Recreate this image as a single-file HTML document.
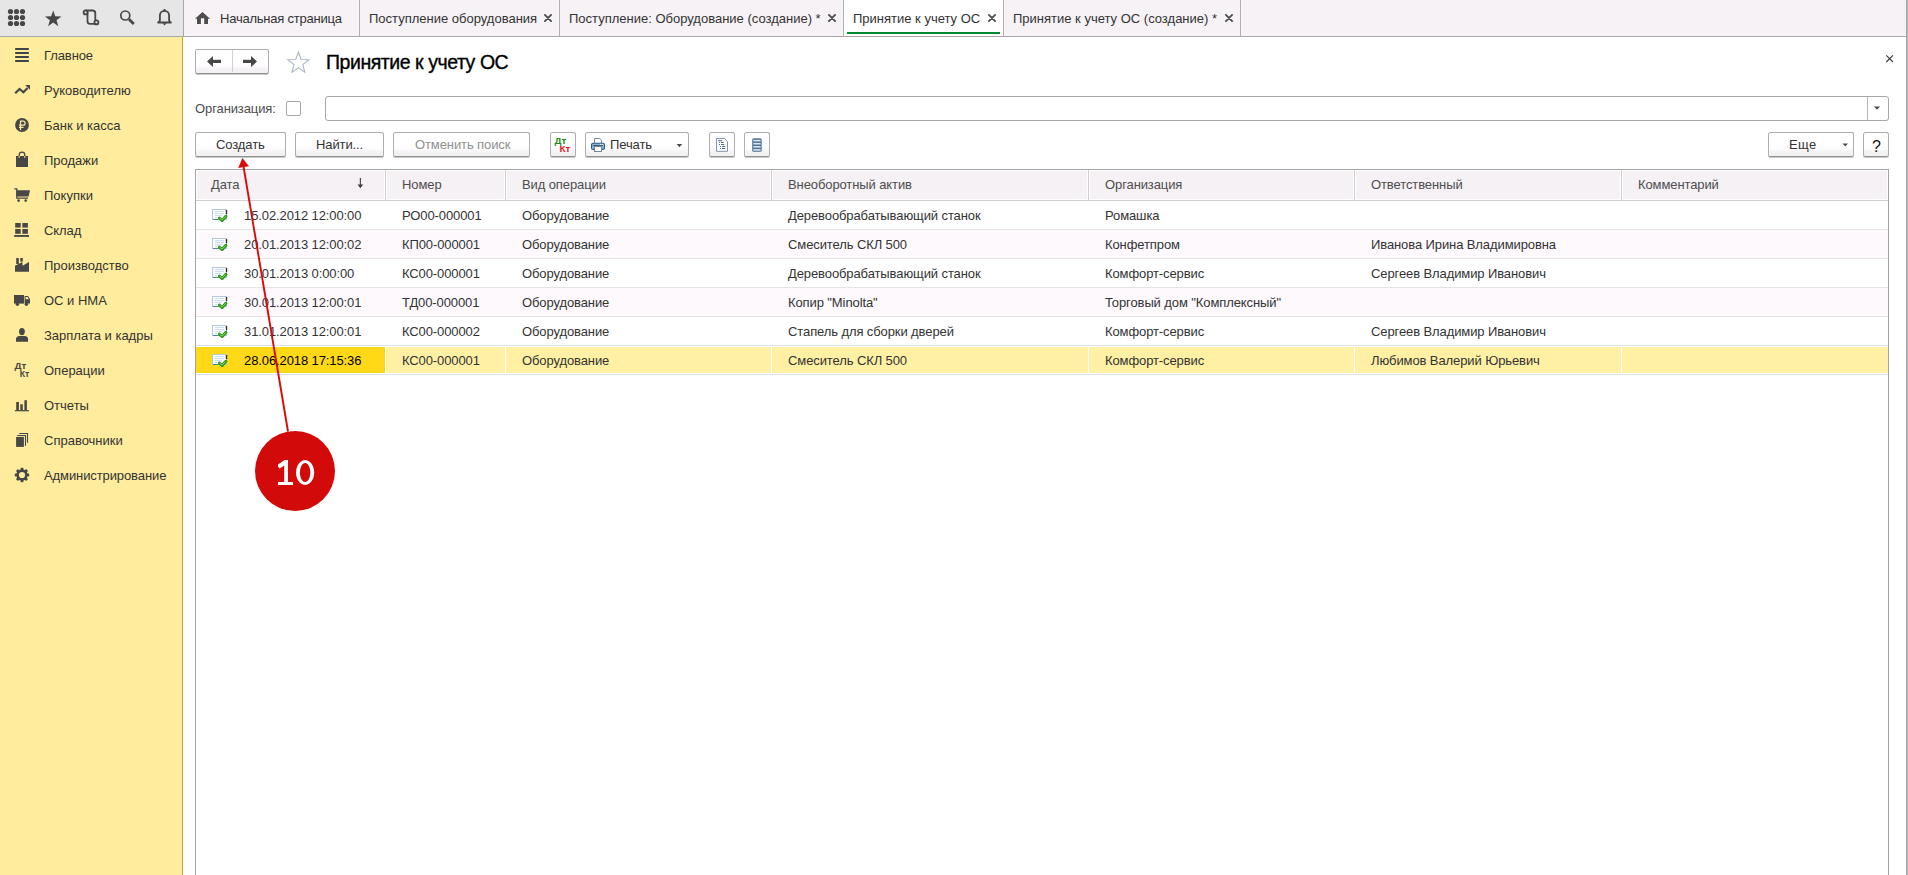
<!DOCTYPE html>
<html><head><meta charset="utf-8">
<style>
*{margin:0;padding:0;box-sizing:border-box}
html,body{width:1908px;height:875px;overflow:hidden;background:#fff}
body{position:relative;font-family:"Liberation Sans",sans-serif;font-size:13px;color:#333;letter-spacing:-0.1px}
.a{position:absolute}
.t{position:absolute;white-space:nowrap;line-height:15px}
svg{position:absolute;overflow:visible}
.btn{position:absolute;border:1px solid #b0aeb2;border-bottom-color:#8f928f;border-radius:2.5px;background:linear-gradient(#fff 0,#fff 60.5%,#fdfbfd 61%,#fdfbfd 73.5%,#f5f5f5 74%,#f5f5f5 82%,#f4f1f4 83%,#f4f1f4 100%);box-shadow:0 1px 0 #c8c8c8}
</style></head><body>
<div class="a" style="left:0px;top:0px;width:183px;height:36px;background:#e6e6e6;"></div>
<div class="a" style="left:184px;top:0px;width:1722px;height:36px;background:#f6f2f6;"></div>
<div class="a" style="left:844px;top:0px;width:159px;height:36px;background:#ffffff;"></div>
<div class="a" style="left:0px;top:36px;width:1906px;height:1px;background:#a9a7aa;"></div>
<div class="a" style="left:183px;top:0px;width:1px;height:36px;background:#a9a7aa;"></div>
<div class="a" style="left:359px;top:0px;width:1px;height:36px;background:#b3b1b4;"></div>
<div class="a" style="left:559px;top:0px;width:1px;height:36px;background:#b3b1b4;"></div>
<div class="a" style="left:843px;top:0px;width:1px;height:36px;background:#b3b1b4;"></div>
<div class="a" style="left:1003px;top:0px;width:1px;height:36px;background:#b3b1b4;"></div>
<div class="a" style="left:1240px;top:0px;width:1px;height:36px;background:#b3b1b4;"></div>
<div class="a" style="left:847px;top:32px;width:153px;height:2px;background:#00892f;"></div>
<div class="a" style="left:1906px;top:0px;width:1px;height:875px;background:#a4a3a8;"></div>
<div class="a" style="left:1907px;top:0px;width:1px;height:875px;background:#b9b9b9;"></div>
<svg style="left:0px;top:0px" width="40" height="36" viewBox="0 0 40 36"><circle cx="10.5" cy="11.5" r="2.6" fill="#474747"/><circle cx="10.5" cy="17.5" r="2.6" fill="#474747"/><circle cx="10.5" cy="23.5" r="2.6" fill="#474747"/><circle cx="16.5" cy="11.5" r="2.6" fill="#474747"/><circle cx="16.5" cy="17.5" r="2.6" fill="#474747"/><circle cx="16.5" cy="23.5" r="2.6" fill="#474747"/><circle cx="22.5" cy="11.5" r="2.6" fill="#474747"/><circle cx="22.5" cy="17.5" r="2.6" fill="#474747"/><circle cx="22.5" cy="23.5" r="2.6" fill="#474747"/></svg>
<svg style="left:40px;top:0px" width="30" height="36" viewBox="40 0 30 36"><polygon points="53.20,10.40 55.26,16.27 61.47,16.41 56.53,20.18 58.31,26.14 53.20,22.60 48.09,26.14 49.87,20.18 44.93,16.41 51.14,16.27" fill="#474747"/></svg>
<svg style="left:78px;top:0px" width="26" height="36" viewBox="78 0 26 36"><g fill="none" stroke="#474747" stroke-width="1.8"><circle cx="85.6" cy="12.4" r="2"/><circle cx="96.4" cy="22.4" r="2"/><path d="M85.6,10.5 H92.6 Q95.3,10.5 95.3,13.3 V20.5"/><path d="M87.5,12.4 V21.3 Q87.5,23.9 90,23.9 H96.4"/></g></svg>
<svg style="left:115px;top:0px" width="26" height="36" viewBox="115 0 26 36"><g fill="none" stroke="#474747"><circle cx="125.3" cy="15.5" r="4.5" stroke-width="1.7"/><path d="M129,19.3 L133.8,24.1" stroke-width="2.8"/></g></svg>
<svg style="left:152px;top:0px" width="26" height="36" viewBox="152 0 26 36"><g fill="none" stroke="#474747" stroke-width="1.8"><path d="M159.9,20.6 V15.4 A4.6,4.6 0 0 1 169.1,15.4 V20.6 L170.9,22.5 H158.1 Z" stroke-linejoin="round"/></g><circle cx="164.5" cy="10.2" r="1.2" fill="#474747"/><path d="M162.5,23.2 H166.5 L164.5,25.6 Z" fill="#474747"/></svg>
<svg style="left:190px;top:0px" width="24" height="36" viewBox="190 0 24 36"><polygon points="202.5,12 210,18.7 208,18.7 208,24 204.2,24 204.2,18.2 200.9,18.2 200.9,24 197,24 197,18.7 195,18.7" fill="#4d4d4d"/></svg>
<div class="t" style="left:220px;top:11px;color:#333;letter-spacing:-0.22px">Начальная страница</div>
<div class="t" style="left:369px;top:11px;color:#333;letter-spacing:0">Поступление оборудования</div>
<svg style="left:543px;top:13px" width="10" height="10" viewBox="543 13 10 10"><path d="M544.9,14.9 L551.1,21.1 M551.1,14.9 L544.9,21.1" stroke="#4a4a4a" stroke-width="1.8" stroke-linecap="round"/></svg>
<div class="t" style="left:569px;top:11px;color:#333;letter-spacing:0">Поступление: Оборудование (создание) *</div>
<svg style="left:827px;top:13px" width="10" height="10" viewBox="827 13 10 10"><path d="M828.9,14.9 L835.1,21.1 M835.1,14.9 L828.9,21.1" stroke="#4a4a4a" stroke-width="1.8" stroke-linecap="round"/></svg>
<div class="t" style="left:853px;top:11px;color:#333;letter-spacing:0">Принятие к учету ОС</div>
<svg style="left:987px;top:13px" width="10" height="10" viewBox="987 13 10 10"><path d="M988.9,14.9 L995.1,21.1 M995.1,14.9 L988.9,21.1" stroke="#4a4a4a" stroke-width="1.8" stroke-linecap="round"/></svg>
<div class="t" style="left:1013px;top:11px;color:#333;letter-spacing:0">Принятие к учету ОС (создание) *</div>
<svg style="left:1223.5px;top:13px" width="10.0" height="10" viewBox="1223.5 13 10.0 10"><path d="M1225.4,14.9 L1231.6,21.1 M1231.6,14.9 L1225.4,21.1" stroke="#4a4a4a" stroke-width="1.8" stroke-linecap="round"/></svg>
<div class="a" style="left:0px;top:37px;width:182px;height:838px;background:#ffec9d;"></div>
<div class="a" style="left:182px;top:37px;width:1px;height:838px;background:#c1a91c;"></div>
<div class="t" style="left:44px;top:48px;color:#333;letter-spacing:-0.1px">Главное</div>
<div class="t" style="left:44px;top:83px;color:#333;letter-spacing:0">Руководителю</div>
<div class="t" style="left:44px;top:118px;color:#333;letter-spacing:0">Банк и касса</div>
<div class="t" style="left:44px;top:153px;color:#333;letter-spacing:0">Продажи</div>
<div class="t" style="left:44px;top:188px;color:#333;letter-spacing:0">Покупки</div>
<div class="t" style="left:44px;top:223px;color:#333;letter-spacing:-0.1px">Склад</div>
<div class="t" style="left:44px;top:258px;color:#333;letter-spacing:0">Производство</div>
<div class="t" style="left:44px;top:293px;color:#333;letter-spacing:0">ОС и НМА</div>
<div class="t" style="left:44px;top:328px;color:#333;letter-spacing:0">Зарплата и кадры</div>
<div class="t" style="left:44px;top:363px;color:#333;letter-spacing:0">Операции</div>
<div class="t" style="left:44px;top:398px;color:#333;letter-spacing:0">Отчеты</div>
<div class="t" style="left:44px;top:433px;color:#333;letter-spacing:0">Справочники</div>
<div class="t" style="left:44px;top:468px;color:#333;letter-spacing:-0.1px">Администрирование</div>
<svg style="left:10px;top:40px" width="24" height="26" viewBox="10 40 24 26"><rect x="15" y="48" width="14" height="2" rx="0.8" fill="#3f4347"/><rect x="15" y="52" width="14" height="2" rx="0.8" fill="#3f4347"/><rect x="15" y="56" width="14" height="2" rx="0.8" fill="#3f4347"/><rect x="15" y="60" width="14" height="2" rx="0.8" fill="#3f4347"/></svg>
<svg style="left:10px;top:80px" width="24" height="20" viewBox="10 80 24 20"><path d="M15.2,93.3 L19.6,89 L23.4,92.3 L27.6,88" fill="none" stroke="#474747" stroke-width="2.2"/><polygon points="25.2,85 30,85 30,89.8" fill="#474747"/></svg>
<svg style="left:10px;top:115px" width="24" height="20" viewBox="10 115 24 20"><circle cx="22" cy="125" r="6.9" fill="#474747"/><path d="M20.5,130 V121.2 H23.2 A1.9,1.9 0 0 1 23.2,125.1 H19 M19,127.4 H23.5" fill="none" stroke="#ffec9d" stroke-width="1.2"/></svg>
<svg style="left:10px;top:148px" width="24" height="24" viewBox="10 148 24 24"><rect x="16" y="156" width="12" height="11" fill="#474747"/><path d="M19.2,157.5 V155 A2.8,2.8 0 0 1 24.8,155 V157.5" fill="none" stroke="#474747" stroke-width="1.3"/><path d="M19.2,156 V158 M24.8,156 V158" stroke="#ffec9d" stroke-width="0.9"/></svg>
<svg style="left:10px;top:185px" width="24" height="20" viewBox="10 185 24 20"><path d="M14.3,188.8 H16.8 V198.2 H28" fill="none" stroke="#474747" stroke-width="1.3"/><polygon points="16.5,190.3 30,190.3 28.6,196.5 16.5,196.5" fill="#474747"/><circle cx="18.6" cy="200.6" r="1.3" fill="#474747"/><circle cx="25.7" cy="200.6" r="1.3" fill="#474747"/></svg>
<svg style="left:10px;top:220px" width="24" height="20" viewBox="10 220 24 20"><g fill="#474747"><rect x="15.2" y="223" width="5.5" height="4.6"/><rect x="22.3" y="223" width="5.6" height="4.6"/><rect x="15.2" y="229" width="5.5" height="4.8"/><rect x="22.3" y="229" width="5.6" height="4.8"/><rect x="14.2" y="235" width="14.8" height="1.9"/></g></svg>
<svg style="left:10px;top:255px" width="24" height="20" viewBox="10 255 24 20"><g fill="#474747"><rect x="16.2" y="258" width="2.6" height="6"/><rect x="20.3" y="258" width="2.5" height="3.6"/><polygon points="15,265.8 22.3,262 22.6,265.8 29,262 29,271.8 15,271.8"/></g></svg>
<svg style="left:10px;top:290px" width="24" height="20" viewBox="10 290 24 20"><g fill="#474747"><rect x="14" y="295" width="10" height="8.6"/><path d="M24.6,296 H28 L30,299 V303.6 H24.6 Z"/><circle cx="17.4" cy="304.2" r="1.7"/><circle cx="26.4" cy="304.2" r="1.7"/></g><path d="M25.6,297 H27.6 L28.9,299.2 H25.6 Z" fill="#ffec9d"/><circle cx="17.4" cy="304.2" r="0.5" fill="#474747"/></svg>
<svg style="left:10px;top:325px" width="24" height="20" viewBox="10 325 24 20"><g fill="#474747"><ellipse cx="21.9" cy="331.6" rx="2.9" ry="3.6"/><path d="M16,341.8 V339 Q16,336.3 19.5,336 H24.5 Q28,336.3 28,339 V341.8 Z"/></g></svg>
<svg style="left:10px;top:358px" width="24" height="22" viewBox="10 358 24 22"><g font-family="Liberation Sans" font-weight="bold" fill="#474747"><text x="14.6" y="369.2" font-size="9.6" textLength="11.6" lengthAdjust="spacingAndGlyphs">Дт</text><text x="19.8" y="377" font-size="9.6" textLength="9.4" lengthAdjust="spacingAndGlyphs">Кт</text></g></svg>
<svg style="left:10px;top:395px" width="24" height="20" viewBox="10 395 24 20"><g fill="#474747"><rect x="16.2" y="402" width="2.7" height="8.5"/><rect x="20.3" y="404.3" width="2.5" height="6.2"/><rect x="24.4" y="400.2" width="2.5" height="10.3"/><rect x="14.9" y="410.1" width="14.1" height="1.2"/></g></svg>
<svg style="left:10px;top:430px" width="24" height="20" viewBox="10 430 24 20"><rect x="16.1" y="436.9" width="7.8" height="10" fill="#474747"/><path d="M17.2,435.5 H25.5 V445.8 M19.3,433.5 H27.5 V442.7" fill="none" stroke="#474747" stroke-width="1.1"/></svg>
<svg style="left:10px;top:465px" width="24" height="20" viewBox="10 465 24 20"><rect x="20.6" y="467.8" width="2.8" height="3" fill="#474747" transform="rotate(0 22 475)"/><rect x="20.6" y="467.8" width="2.8" height="3" fill="#474747" transform="rotate(45 22 475)"/><rect x="20.6" y="467.8" width="2.8" height="3" fill="#474747" transform="rotate(90 22 475)"/><rect x="20.6" y="467.8" width="2.8" height="3" fill="#474747" transform="rotate(135 22 475)"/><rect x="20.6" y="467.8" width="2.8" height="3" fill="#474747" transform="rotate(180 22 475)"/><rect x="20.6" y="467.8" width="2.8" height="3" fill="#474747" transform="rotate(225 22 475)"/><rect x="20.6" y="467.8" width="2.8" height="3" fill="#474747" transform="rotate(270 22 475)"/><rect x="20.6" y="467.8" width="2.8" height="3" fill="#474747" transform="rotate(315 22 475)"/><circle cx="22" cy="475" r="4.4" fill="none" stroke="#474747" stroke-width="2.6"/></svg>
<div class="btn" style="left:195px;top:49px;width:74px;height:25px"></div>
<div class="a" style="left:232px;top:50px;width:1px;height:22px;background:#d2d0d2;"></div>
<svg style="left:205px;top:50px" width="20" height="20" viewBox="205 50 20 20"><polygon points="207,61.5 213,56 213,67" fill="#474747"/><rect x="212" y="59.8" width="9" height="3.2" fill="#474747"/></svg>
<svg style="left:240px;top:50px" width="20" height="20" viewBox="240 50 20 20"><polygon points="257,61.5 251,56 251,67" fill="#474747"/><rect x="243" y="59.8" width="9" height="3.2" fill="#474747"/></svg>
<svg style="left:284px;top:48px" width="30" height="28" viewBox="284 48 30 28"><polygon points="298.40,52.20 301.10,59.48 308.86,59.80 302.77,64.62 304.87,72.10 298.40,67.80 291.93,72.10 294.03,64.62 287.94,59.80 295.70,59.48" fill="none" stroke="#a9b7c6" stroke-width="1.1"/></svg>
<div class="a" style="left:326px;top:51px;font-size:19.5px;white-space:nowrap;color:#000;letter-spacing:-0.45px;-webkit-text-stroke:0.35px #000">Принятие к учету ОС</div>
<svg style="left:1884px;top:53px" width="12" height="12" viewBox="1884 53 12 12"><path d="M1886.3,55.3 L1893,62 M1893,55.3 L1886.3,62" stroke="#3a3a3a" stroke-width="1.1"/></svg>
<div class="t" style="left:195px;top:101px;color:#4d4d4d;">Организация:</div>
<div class="a" style="left:286px;top:101px;width:15px;height:15px;border:1px solid #a8a8a8;border-radius:2px;background:#fff"></div>
<div class="a" style="left:325px;top:96px;width:1564px;height:25px;border:1px solid #a8a8a8;border-radius:3px;background:#fff"></div>
<div class="a" style="left:1867px;top:97px;width:1px;height:23px;background:#b8b8b8;"></div>
<svg style="left:1872px;top:104px" width="10" height="8" viewBox="1872 104 10 8"><polygon points="1874,106.5 1880,106.5 1877,109.8" fill="#4a4a4a"/></svg>
<div class="btn" style="left:195px;top:132px;width:91px;height:25px"></div>
<div class="t" style="left:216px;top:137px;color:#333;">Создать</div>
<div class="btn" style="left:295px;top:132px;width:89px;height:25px"></div>
<div class="t" style="left:316px;top:137px;color:#333;">Найти...</div>
<div class="btn" style="left:393px;top:132px;width:137px;height:25px"></div>
<div class="t" style="left:415px;top:137px;color:#8f8f8f;">Отменить поиск</div>
<div class="btn" style="left:550px;top:132px;width:26px;height:25px"></div>
<svg style="left:550px;top:132px" width="26" height="24" viewBox="550 132 26 24"><g font-family="Liberation Sans" font-weight="bold"><text x="554.6" y="144.2" font-size="9.6" textLength="11.6" lengthAdjust="spacingAndGlyphs" fill="#1f8a1f">Дт</text><text x="559.6" y="152" font-size="9.6" textLength="10.6" lengthAdjust="spacingAndGlyphs" fill="#e8201e">Кт</text></g></svg>
<div class="btn" style="left:585px;top:132px;width:104px;height:25px"></div>
<div class="t" style="left:610px;top:137px;color:#333;">Печать</div>
<svg style="left:589px;top:136px" width="20" height="18" viewBox="589 136 20 18"><path d="M594.5,143.2 V138.5 H599.7 L601.6,140.4 V143.2" fill="#fff" stroke="#6a8098" stroke-width="0.95"/><rect x="591.5" y="143.3" width="13" height="6.2" rx="1.6" fill="#8cb2d6" stroke="#255a86" stroke-width="1.05"/><rect x="593" y="145.1" width="10" height="0.9" fill="#34506a"/><circle cx="600.7" cy="144.4" r="0.55" fill="#fff"/><circle cx="602.6" cy="144.4" r="0.55" fill="#fff"/><rect x="594.5" y="146.6" width="7" height="4.9" fill="#fff" stroke="#6a8098" stroke-width="0.95"/></svg>
<svg style="left:674px;top:142px" width="10" height="8" viewBox="674 142 10 8"><polygon points="676.7,144 682.2,144 679.45,147.2" fill="#4a4a4a"/></svg>
<div class="btn" style="left:709px;top:132px;width:26px;height:25px"></div>
<svg style="left:714px;top:136px" width="16" height="18" viewBox="714 136 16 18"><path d="M716.5,138.5 H724.5 L727.5,141.5 V151.3 H716.5 Z" fill="#fff" stroke="#6f8aa5" stroke-width="0.9"/><g fill="#2f5478"><rect x="718.2" y="140.3" width="4" height="0.9"/><circle cx="719.5" cy="142.5" r="0.6"/><rect x="721" y="142.1" width="2.6" height="0.9"/><circle cx="719.5" cy="144.5" r="0.6"/><rect x="721" y="144.1" width="3.2" height="0.9"/><circle cx="720.4" cy="146.5" r="0.6"/><rect x="722" y="146.1" width="3.2" height="0.9"/><circle cx="720.4" cy="148.5" r="0.6"/><rect x="722" y="148.1" width="3.2" height="0.9"/></g></svg>
<div class="btn" style="left:744px;top:132px;width:26px;height:25px"></div>
<svg style="left:750px;top:136px" width="16" height="18" viewBox="750 136 16 18"><rect x="752.2" y="138.2" width="9.5" height="13.5" rx="1.5" fill="#4f7396"/><g fill="#d8e4ef"><rect x="753.3" y="139.8" width="7.3" height="1.6"/><rect x="753.3" y="142.9" width="7.3" height="1.6"/><rect x="753.3" y="146" width="7.3" height="1.6"/><rect x="753.3" y="149.1" width="7.3" height="1.6"/></g></svg>
<div class="btn" style="left:1768px;top:132px;width:86px;height:25px"></div>
<div class="t" style="left:1789px;top:137px;color:#333;letter-spacing:0.4px">Еще</div>
<svg style="left:1840px;top:140px" width="10" height="8" viewBox="1840 140 10 8"><polygon points="1842.5,143.5 1848,143.5 1845.25,146.6" fill="#4a4a4a"/></svg>
<div class="btn" style="left:1863px;top:132px;width:26px;height:25px"></div>
<div class="a" style="left:1872px;top:138px;font-size:16px;color:#111;letter-spacing:0;white-space:nowrap">?</div>
<div class="a" style="left:195px;top:169px;width:1694px;height:720px;border:1px solid #a3a3a3;border-bottom:none"></div>
<div class="a" style="left:197px;top:171px;width:1690px;height:28px;background:#f5f1f5;"></div>
<div class="a" style="left:196px;top:200px;width:1692px;height:1px;background:#cfcfcf;"></div>
<div class="a" style="left:385px;top:170px;width:1px;height:30px;background:#cfcfcf;"></div>
<div class="a" style="left:384px;top:171px;width:1px;height:28px;background:#fff;"></div>
<div class="a" style="left:386px;top:171px;width:1px;height:28px;background:#fff;"></div>
<div class="a" style="left:505px;top:170px;width:1px;height:30px;background:#cfcfcf;"></div>
<div class="a" style="left:504px;top:171px;width:1px;height:28px;background:#fff;"></div>
<div class="a" style="left:506px;top:171px;width:1px;height:28px;background:#fff;"></div>
<div class="a" style="left:771px;top:170px;width:1px;height:30px;background:#cfcfcf;"></div>
<div class="a" style="left:770px;top:171px;width:1px;height:28px;background:#fff;"></div>
<div class="a" style="left:772px;top:171px;width:1px;height:28px;background:#fff;"></div>
<div class="a" style="left:1088px;top:170px;width:1px;height:30px;background:#cfcfcf;"></div>
<div class="a" style="left:1087px;top:171px;width:1px;height:28px;background:#fff;"></div>
<div class="a" style="left:1089px;top:171px;width:1px;height:28px;background:#fff;"></div>
<div class="a" style="left:1354px;top:170px;width:1px;height:30px;background:#cfcfcf;"></div>
<div class="a" style="left:1353px;top:171px;width:1px;height:28px;background:#fff;"></div>
<div class="a" style="left:1355px;top:171px;width:1px;height:28px;background:#fff;"></div>
<div class="a" style="left:1621px;top:170px;width:1px;height:30px;background:#cfcfcf;"></div>
<div class="a" style="left:1620px;top:171px;width:1px;height:28px;background:#fff;"></div>
<div class="a" style="left:1622px;top:171px;width:1px;height:28px;background:#fff;"></div>
<div class="t" style="left:211px;top:177px;color:#4d4d4d;">Дата</div>
<div class="t" style="left:402px;top:177px;color:#4d4d4d;">Номер</div>
<div class="t" style="left:522px;top:177px;color:#4d4d4d;">Вид операции</div>
<div class="t" style="left:788px;top:177px;color:#4d4d4d;">Внеоборотный актив</div>
<div class="t" style="left:1105px;top:177px;color:#4d4d4d;">Организация</div>
<div class="t" style="left:1371px;top:177px;color:#4d4d4d;">Ответственный</div>
<div class="t" style="left:1638px;top:177px;color:#4d4d4d;">Комментарий</div>
<svg style="left:355px;top:176px" width="10" height="14" viewBox="355 176 10 14"><rect x="359.8" y="178" width="1.1" height="7.5" fill="#3a3a3a"/><polygon points="357.6,184.6 363.1,184.6 360.35,188.2" fill="#3a3a3a"/></svg>
<div class="a" style="left:196px;top:229px;width:1692px;height:1px;background:#e3e3e3;"></div>
<svg style="left:210px;top:206px" width="20" height="20" viewBox="210 206 20 20"><rect x="212.5" y="209.5" width="14" height="10" fill="#fff" stroke="#b3c6de" stroke-width="1"/><rect x="225.8" y="210" width="1.4" height="4.2" rx="0.6" fill="#2e2e2e"/><rect x="213" y="219" width="5.5" height="1" fill="#4b8a8e"/><g fill="#c9daef"><rect x="215" y="211.1" width="9" height="1"/><rect x="215" y="213.1" width="9" height="1"/><rect x="215" y="215.1" width="7" height="1"/><rect x="215" y="217.1" width="2" height="1"/></g><path d="M219.4,218.1 L222.2,220.5 L225.9,216.3" fill="none" stroke="#2f9418" stroke-width="3" stroke-linejoin="round" stroke-linecap="round"/><path d="M219.6,218.1 L222.2,220.1 L225.6,216.4" fill="none" stroke="#80e050" stroke-width="1" stroke-linejoin="round"/></svg>
<div class="t" style="left:244px;top:208px;color:#333;">15.02.2012 12:00:00</div>
<div class="t" style="left:402px;top:208px;color:#333;">РО00-000001</div>
<div class="t" style="left:522px;top:208px;color:#333;">Оборудование</div>
<div class="t" style="left:788px;top:208px;color:#333;">Деревообрабатывающий станок</div>
<div class="t" style="left:1105px;top:208px;color:#333;">Ромашка</div>
<div class="a" style="left:196px;top:230px;width:1692px;height:28px;background:#fdf9fd;"></div>
<div class="a" style="left:196px;top:258px;width:1692px;height:1px;background:#e3e3e3;"></div>
<svg style="left:210px;top:235px" width="20" height="20" viewBox="210 235 20 20"><rect x="212.5" y="238.5" width="14" height="10" fill="#fff" stroke="#b3c6de" stroke-width="1"/><rect x="225.8" y="239" width="1.4" height="4.2" rx="0.6" fill="#2e2e2e"/><rect x="213" y="248" width="5.5" height="1" fill="#4b8a8e"/><g fill="#c9daef"><rect x="215" y="240.1" width="9" height="1"/><rect x="215" y="242.1" width="9" height="1"/><rect x="215" y="244.1" width="7" height="1"/><rect x="215" y="246.1" width="2" height="1"/></g><path d="M219.4,247.1 L222.2,249.5 L225.9,245.3" fill="none" stroke="#2f9418" stroke-width="3" stroke-linejoin="round" stroke-linecap="round"/><path d="M219.6,247.1 L222.2,249.1 L225.6,245.4" fill="none" stroke="#80e050" stroke-width="1" stroke-linejoin="round"/></svg>
<div class="t" style="left:244px;top:237px;color:#333;">20.01.2013 12:00:02</div>
<div class="t" style="left:402px;top:237px;color:#333;">КП00-000001</div>
<div class="t" style="left:522px;top:237px;color:#333;">Оборудование</div>
<div class="t" style="left:788px;top:237px;color:#333;">Смеситель СКЛ 500</div>
<div class="t" style="left:1105px;top:237px;color:#333;">Конфетпром</div>
<div class="t" style="left:1371px;top:237px;color:#333;">Иванова Ирина Владимировна</div>
<div class="a" style="left:196px;top:287px;width:1692px;height:1px;background:#e3e3e3;"></div>
<svg style="left:210px;top:264px" width="20" height="20" viewBox="210 264 20 20"><rect x="212.5" y="267.5" width="14" height="10" fill="#fff" stroke="#b3c6de" stroke-width="1"/><rect x="225.8" y="268" width="1.4" height="4.2" rx="0.6" fill="#2e2e2e"/><rect x="213" y="277" width="5.5" height="1" fill="#4b8a8e"/><g fill="#c9daef"><rect x="215" y="269.1" width="9" height="1"/><rect x="215" y="271.1" width="9" height="1"/><rect x="215" y="273.1" width="7" height="1"/><rect x="215" y="275.1" width="2" height="1"/></g><path d="M219.4,276.1 L222.2,278.5 L225.9,274.3" fill="none" stroke="#2f9418" stroke-width="3" stroke-linejoin="round" stroke-linecap="round"/><path d="M219.6,276.1 L222.2,278.1 L225.6,274.4" fill="none" stroke="#80e050" stroke-width="1" stroke-linejoin="round"/></svg>
<div class="t" style="left:244px;top:266px;color:#333;">30.01.2013 0:00:00</div>
<div class="t" style="left:402px;top:266px;color:#333;">КС00-000001</div>
<div class="t" style="left:522px;top:266px;color:#333;">Оборудование</div>
<div class="t" style="left:788px;top:266px;color:#333;">Деревообрабатывающий станок</div>
<div class="t" style="left:1105px;top:266px;color:#333;">Комфорт-сервис</div>
<div class="t" style="left:1371px;top:266px;color:#333;">Сергеев Владимир Иванович</div>
<div class="a" style="left:196px;top:288px;width:1692px;height:28px;background:#fdf9fd;"></div>
<div class="a" style="left:196px;top:316px;width:1692px;height:1px;background:#e3e3e3;"></div>
<svg style="left:210px;top:293px" width="20" height="20" viewBox="210 293 20 20"><rect x="212.5" y="296.5" width="14" height="10" fill="#fff" stroke="#b3c6de" stroke-width="1"/><rect x="225.8" y="297" width="1.4" height="4.2" rx="0.6" fill="#2e2e2e"/><rect x="213" y="306" width="5.5" height="1" fill="#4b8a8e"/><g fill="#c9daef"><rect x="215" y="298.1" width="9" height="1"/><rect x="215" y="300.1" width="9" height="1"/><rect x="215" y="302.1" width="7" height="1"/><rect x="215" y="304.1" width="2" height="1"/></g><path d="M219.4,305.1 L222.2,307.5 L225.9,303.3" fill="none" stroke="#2f9418" stroke-width="3" stroke-linejoin="round" stroke-linecap="round"/><path d="M219.6,305.1 L222.2,307.1 L225.6,303.4" fill="none" stroke="#80e050" stroke-width="1" stroke-linejoin="round"/></svg>
<div class="t" style="left:244px;top:295px;color:#333;">30.01.2013 12:00:01</div>
<div class="t" style="left:402px;top:295px;color:#333;">ТД00-000001</div>
<div class="t" style="left:522px;top:295px;color:#333;">Оборудование</div>
<div class="t" style="left:788px;top:295px;color:#333;">Копир "Minolta"</div>
<div class="t" style="left:1105px;top:295px;color:#333;">Торговый дом "Комплексный"</div>
<div class="a" style="left:196px;top:345px;width:1692px;height:1px;background:#e3e3e3;"></div>
<svg style="left:210px;top:322px" width="20" height="20" viewBox="210 322 20 20"><rect x="212.5" y="325.5" width="14" height="10" fill="#fff" stroke="#b3c6de" stroke-width="1"/><rect x="225.8" y="326" width="1.4" height="4.2" rx="0.6" fill="#2e2e2e"/><rect x="213" y="335" width="5.5" height="1" fill="#4b8a8e"/><g fill="#c9daef"><rect x="215" y="327.1" width="9" height="1"/><rect x="215" y="329.1" width="9" height="1"/><rect x="215" y="331.1" width="7" height="1"/><rect x="215" y="333.1" width="2" height="1"/></g><path d="M219.4,334.1 L222.2,336.5 L225.9,332.3" fill="none" stroke="#2f9418" stroke-width="3" stroke-linejoin="round" stroke-linecap="round"/><path d="M219.6,334.1 L222.2,336.1 L225.6,332.4" fill="none" stroke="#80e050" stroke-width="1" stroke-linejoin="round"/></svg>
<div class="t" style="left:244px;top:324px;color:#333;">31.01.2013 12:00:01</div>
<div class="t" style="left:402px;top:324px;color:#333;">КС00-000002</div>
<div class="t" style="left:522px;top:324px;color:#333;">Оборудование</div>
<div class="t" style="left:788px;top:324px;color:#333;">Стапель для сборки дверей</div>
<div class="t" style="left:1105px;top:324px;color:#333;">Комфорт-сервис</div>
<div class="t" style="left:1371px;top:324px;color:#333;">Сергеев Владимир Иванович</div>
<div class="a" style="left:196px;top:347px;width:189px;height:26px;background:#ffd817;"></div>
<div class="a" style="left:386px;top:347px;width:119px;height:26px;background:#fff0a4;"></div>
<div class="a" style="left:506px;top:347px;width:265px;height:26px;background:#fff0a4;"></div>
<div class="a" style="left:772px;top:347px;width:316px;height:26px;background:#fff0a4;"></div>
<div class="a" style="left:1089px;top:347px;width:265px;height:26px;background:#fff0a4;"></div>
<div class="a" style="left:1355px;top:347px;width:266px;height:26px;background:#fff0a4;"></div>
<div class="a" style="left:1622px;top:347px;width:266px;height:26px;background:#fff0a4;"></div>
<div class="a" style="left:196px;top:374px;width:1692px;height:1px;background:#e3e3e3;"></div>
<svg style="left:210px;top:351px" width="20" height="20" viewBox="210 351 20 20"><rect x="212.5" y="354.5" width="14" height="10" fill="#fff" stroke="#b3c6de" stroke-width="1"/><rect x="225.8" y="355" width="1.4" height="4.2" rx="0.6" fill="#2e2e2e"/><rect x="213" y="364" width="5.5" height="1" fill="#4b8a8e"/><g fill="#c9daef"><rect x="215" y="356.1" width="9" height="1"/><rect x="215" y="358.1" width="9" height="1"/><rect x="215" y="360.1" width="7" height="1"/><rect x="215" y="362.1" width="2" height="1"/></g><path d="M219.4,363.1 L222.2,365.5 L225.9,361.3" fill="none" stroke="#2f9418" stroke-width="3" stroke-linejoin="round" stroke-linecap="round"/><path d="M219.6,363.1 L222.2,365.1 L225.6,361.4" fill="none" stroke="#80e050" stroke-width="1" stroke-linejoin="round"/></svg>
<div class="t" style="left:244px;top:353px;color:#000;">28.06.2018 17:15:36</div>
<div class="t" style="left:402px;top:353px;color:#333;">КС00-000001</div>
<div class="t" style="left:522px;top:353px;color:#333;">Оборудование</div>
<div class="t" style="left:788px;top:353px;color:#333;">Смеситель СКЛ 500</div>
<div class="t" style="left:1105px;top:353px;color:#333;">Комфорт-сервис</div>
<div class="t" style="left:1371px;top:353px;color:#333;">Любимов Валерий Юрьевич</div>
<svg style="left:230px;top:150px" width="120" height="370" viewBox="230 150 120 370"><path d="M243.6,167 L288,431.5" stroke="#d90a0a" stroke-width="1.9"/><polygon points="242.4,158 238.2,168 249,166.3" fill="#d90a0a"/><circle cx="295" cy="471" r="40" fill="#d20a0a"/></svg>
<svg style="left:270px;top:455px" width="50" height="35" viewBox="270 455 50 35"><g fill="#fff"><rect x="284.2" y="460" width="3.8" height="23.5"/><rect x="278" y="482" width="15" height="3"/><polygon points="278,464.6 284.6,460 288,460 288,463.2 279.6,468.6 278,466.6"/><path fill-rule="evenodd" d="M305.1,460 a9.1,12.5 0 1 0 0.01,0 Z M305.1,463.1 a5.2,9.4 0 1 0 0.01,0 Z"/></g></svg>
</body></html>
